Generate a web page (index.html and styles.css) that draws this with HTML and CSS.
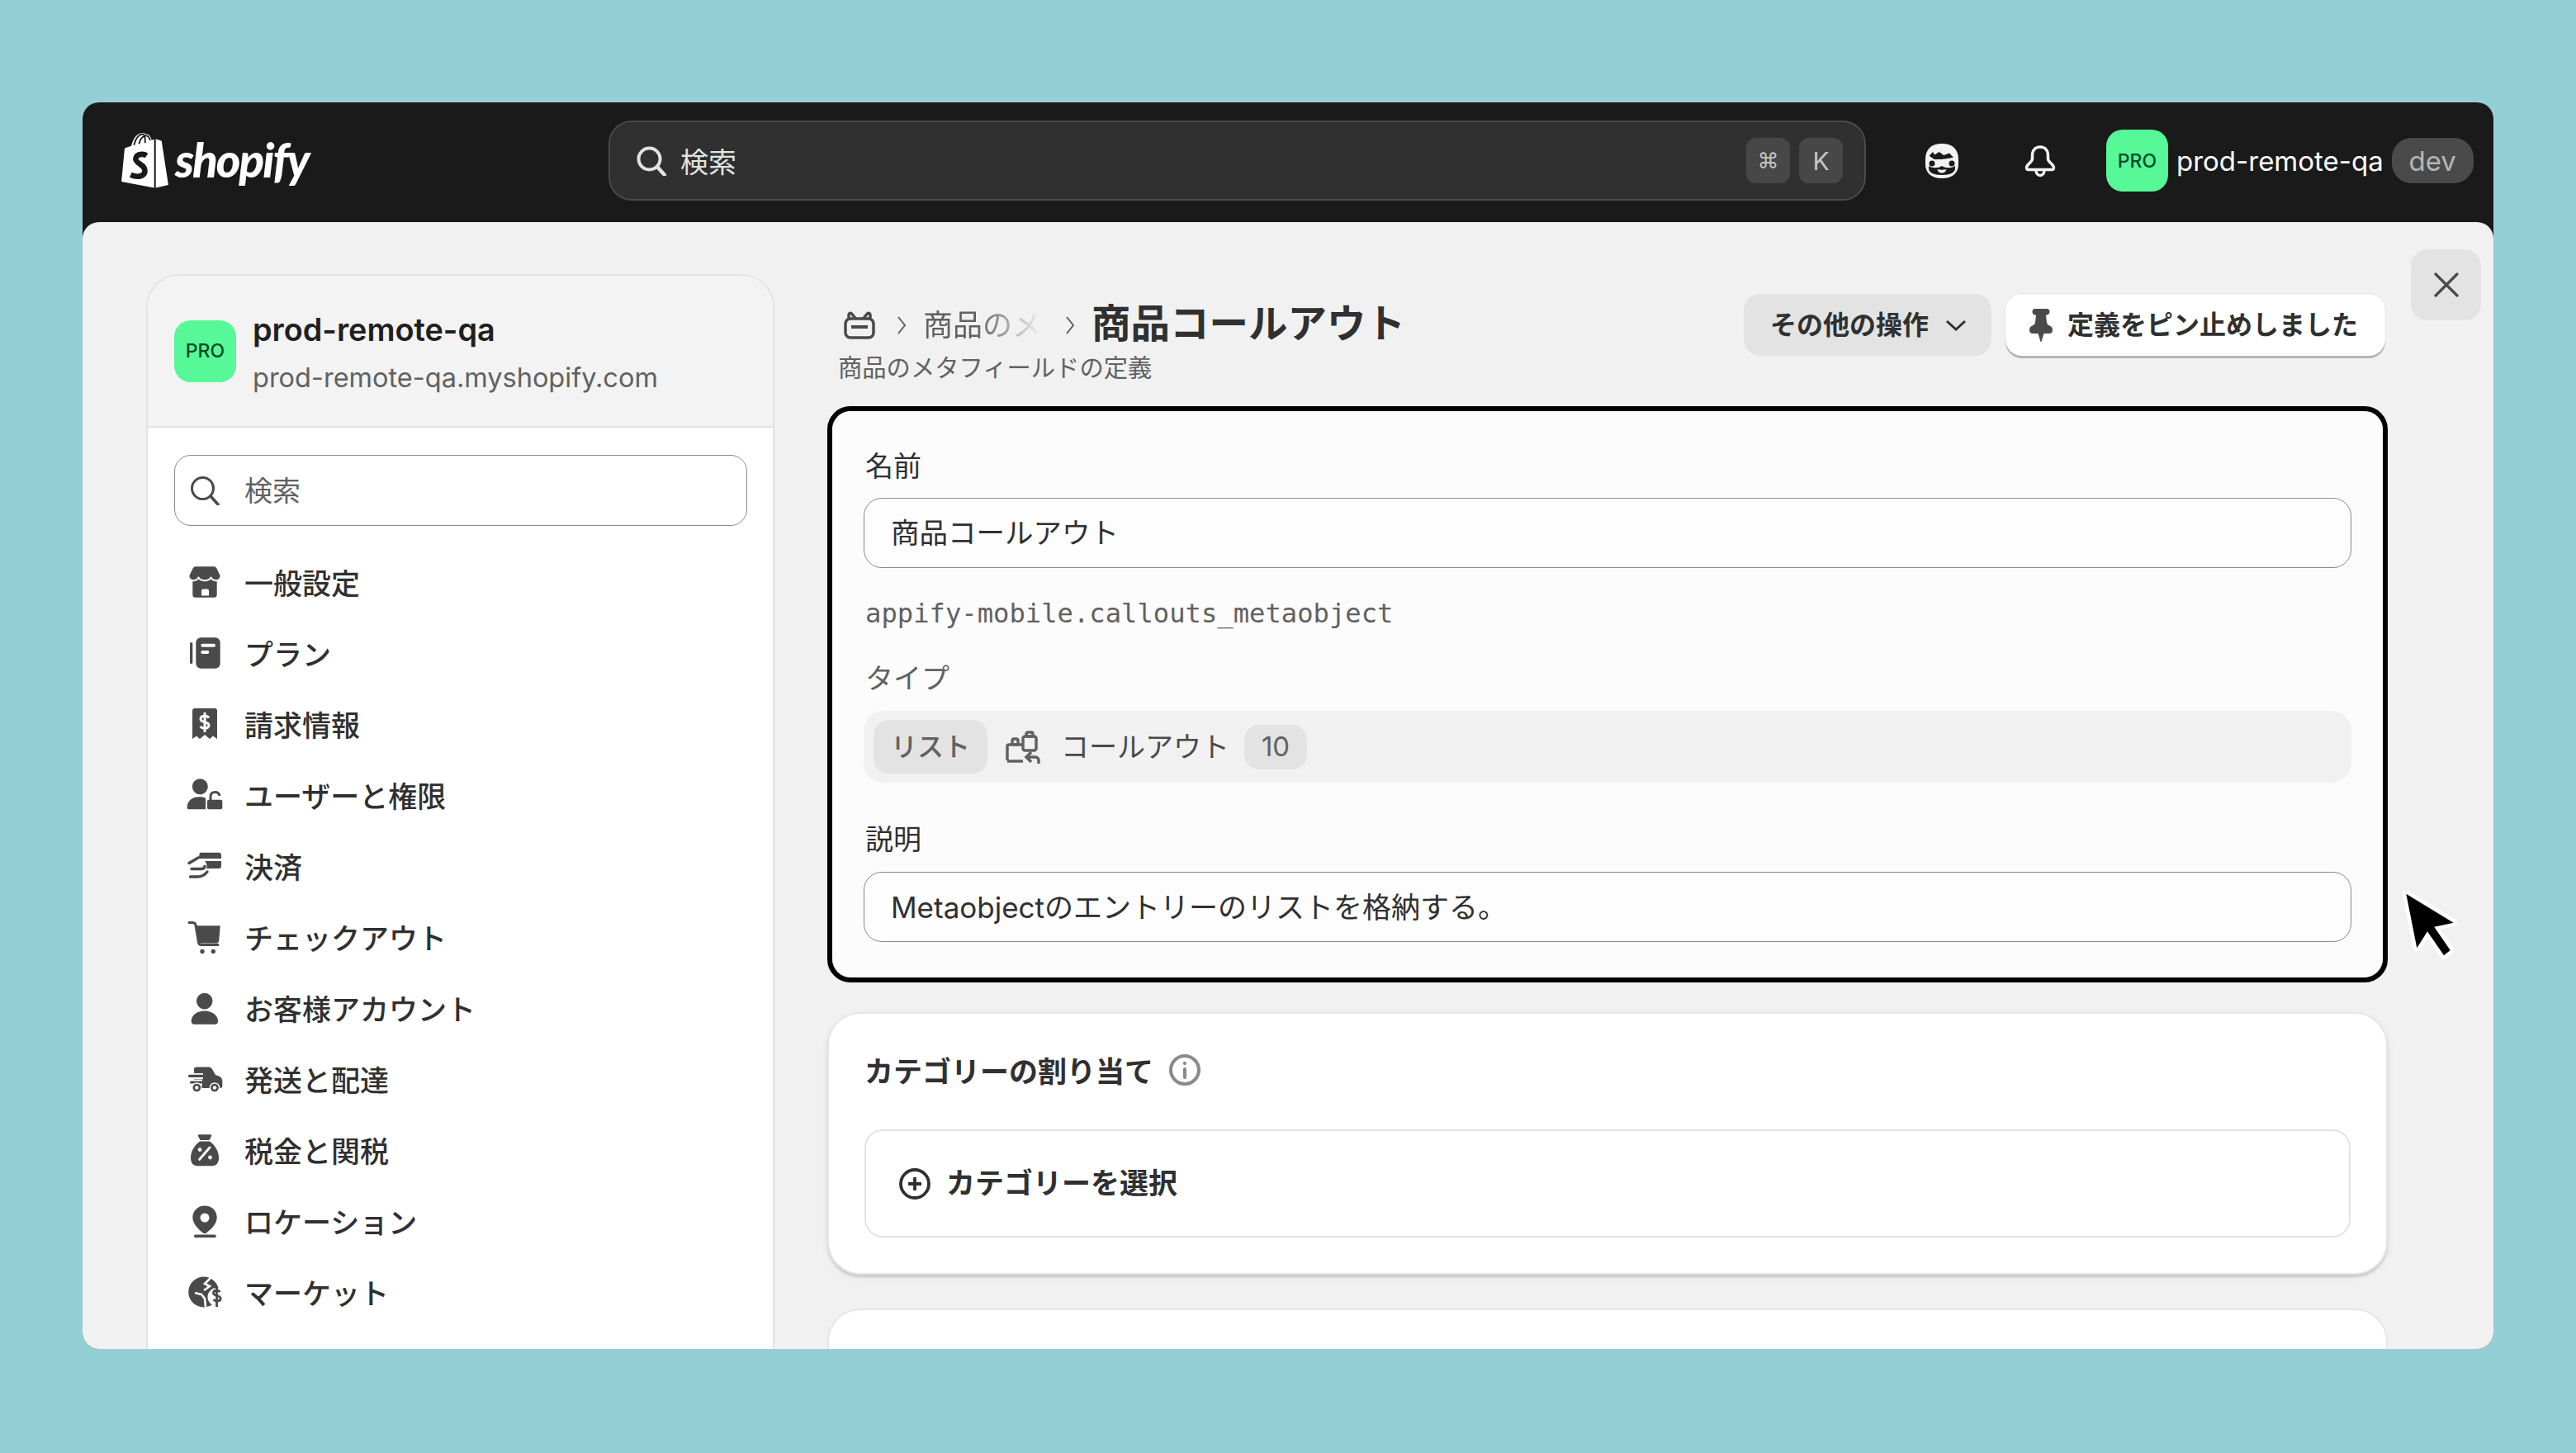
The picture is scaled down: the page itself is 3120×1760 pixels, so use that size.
FILE: index.html
```html
<!DOCTYPE html>
<html lang="ja">
<head>
    <meta charset="UTF-8">
    <title>商品コールアウト</title>
    <link rel="stylesheet" href="styles.css">
</head>
<body>
    <div class="window">
        <header class="topbar">
            <div class="logo">
                <svg class="logo-bag" viewBox="0 0 56 66">
                    <path fill="#fff" d="M38 8l-2 .6C35 4.500 33 1.500 29.500 1.500h-.8C27.600.4 26.400 0 25.300 0 17 0 13 10 11.800 15.500l-6 1.900c-1.800.6-1.900.6-2.100 2.300L0 58l39 7.500V7.800z"/>
                    <path fill="#fff" d="M41 7.500V65.500L56 62 48 10c-.1-.5-.5-.8-1-.9z"/>
                    <path fill="none" stroke="#1a1a1a" stroke-width="1.800" d="M15 14.500c1.500-6 5-12.500 10-13 2-.2 3 2 3.200 5.500v5M21 13c1-4.500 3-8.500 7-9.500 3-.7 5.500 1 6.200 5.500"/>
                    <path fill="none" stroke="#1a1a1a" stroke-width="6.500" d="M30 27c-3-2-12-3-13 3.500-.8 6 11.500 7 11 15-.4 6-8 8.500-17 4.500"/>
                </svg>
                <span class="logo-text">shopify</span>
            </div>
            <div class="global-search">
                <svg class="search-icon" viewBox="0 0 36 36"><circle cx="15.500" cy="15.500" r="13" fill="none" stroke="#e3e3e3" stroke-width="4"/><path d="M25 25l9 10" stroke="#e3e3e3" stroke-width="4.500" stroke-linecap="round"/></svg>
                <span class="global-search-text">検索</span>
                <span class="key key-cmd">⌘</span>
                <span class="key">K</span>
            </div>
            <svg class="mask-icon" viewBox="0 0 42 42">
                <path fill="#f3f3f3" d="M21 0c13 0 20 7 20 19v6c0 11-8 17-20 17S1 36 1 25v-6C1 7 8 0 21 0z"/>
                <path fill="#1a1a1a" d="M5.600 14.700L10 10l2.300 3.400L17.600 10l5.700 4 6.700-2.600 5 5.300-6.700 1.300-8.300 1-8.400 0zM5 27c5 3 11 3 16 0 5 3 11 3 16 0v3c0 5-6 8-16 8S5 35 5 30z"/>
                <circle cx="9" cy="24" r="3.500" fill="#1a1a1a"/><circle cx="33" cy="24" r="3.500" fill="#1a1a1a"/>
                <path fill="#f3f3f3" d="M15.500 31c3.500 1 7.500 1 11 0-.5 3-2.800 4.500-5.500 4.500S16 34 15.500 31z"/>
            </svg>
            <svg class="bell-icon" viewBox="0 0 40 42" fill="none" stroke="#f3f3f3" stroke-width="3.500">
                <path d="M20 4c-6.500 0-9.500 4.500-9.500 10.500v4c0 4-7 6.500-7 10.500 0 1.500 1 2.500 2.500 2.500h28c1.500 0 2.500-1 2.500-2.500 0-4-7-6.500-7-10.500v-4C29.500 8.500 26.500 4 20 4z"/>
                <path d="M15 32c0 4 2 6.500 5 6.500s5-2.500 5-6.500"/>
            </svg>
            <div class="avatar avatar-top">PRO</div>
            <span class="store-name">prod-remote-qa</span>
            <span class="dev-pill">dev</span>
        </header>

        <div class="content">
            <aside class="sidebar">
                <div class="store-head">
                    <div class="avatar">PRO</div>
                    <div class="store-text">
                        <div class="store-title">prod-remote-qa</div>
                        <div class="store-domain">prod-remote-qa.myshopify.com</div>
                    </div>
                </div>
                <div class="side-body">
                    <div class="side-search">
                        <svg class="side-search-icon" viewBox="0 0 36 36"><circle cx="15.500" cy="15.500" r="13" fill="none" stroke="#4a4a4a" stroke-width="3"/><path d="M25 25l9 10" stroke="#4a4a4a" stroke-width="3.500" stroke-linecap="round"/></svg>
                        <span>検索</span>
                    </div>
                    <nav class="side-nav">
                        <a class="nav-item">
                            <svg class="nav-icon" viewBox="0 0 44 40">
                                <rect x="7.300" y="12" width="29.400" height="27.700" rx="3.500"/>
                                <path stroke="#fff" stroke-width="2" d="M11 1.300h22c2.500 0 3.500 1 4.500 3l3.800 8c1 3.500-1.500 7-5.300 7-2.700 0-5-1.200-6.500-3.500-1.500 2.300-4 3.500-7.500 3.500s-6-1.200-7.500-3.500c-1.500 2.300-3.800 3.500-6.500 3.500-3.800 0-6.300-3.500-5.300-7l3.800-8c1-2 2-3 4.500-3z"/>
                                <path fill="#fff" d="M18 37.500v-6a2 2 0 0 1 2-2h5a2 2 0 0 1 2 2v6z"/>
                            </svg>
                            <span>一般設定</span>
                        </a>
                        <a class="nav-item">
                            <svg class="nav-icon" viewBox="0 0 44 40">
                                <rect x="4" y="8" width="3.300" height="26" rx="1.600"/>
                                <rect x="11.300" y="2.300" width="29.400" height="37.400" rx="6"/>
                                <rect x="17.300" y="9.700" width="17.700" height="4" rx="2" fill="#fff"/>
                                <rect x="17.300" y="18" width="10" height="4" rx="2" fill="#fff"/>
                            </svg>
                            <span>プラン</span>
                        </a>
                        <a class="nav-item">
                            <svg class="nav-icon" viewBox="0 0 44 40">
                                <path d="M10 2h24a3 3 0 0 1 3 3v34l-5-3.500-4 3.500-6-5-6 5-4-3.500-5 3.500V5a3 3 0 0 1 3-3z"/>
                                <path fill="none" stroke="#fff" stroke-width="3" d="M27 13.500c-1-1.500-3-2.200-5-2.200-2.800 0-5 1.300-5 3.600 0 5 10 2.700 10 7.600 0 2.300-2.200 3.700-5 3.700-2.200 0-4.200-.8-5.300-2.400M22 7v24"/>
                            </svg>
                            <span>請求情報</span>
                        </a>
                        <a class="nav-item">
                            <svg class="nav-icon" viewBox="0 0 44 40">
                                <circle cx="16.300" cy="10.700" r="9.500"/>
                                <path d="M.7 36c0-8 6-12.700 15-12.700 2.700 0 5 .4 7.300 1.300v13.700H3c-1.500 0-2.300-.8-2.300-2.300z"/>
                                <rect x="25" y="26.700" width="18.300" height="11.600" rx="2"/>
                                <path fill="none" stroke="#4a4a4a" stroke-width="3" d="M29 28v-5c0-3.500 2.300-5.500 5.500-5.500s5 2 5.500 4.500"/>
                            </svg>
                            <span>ユーザーと権限</span>
                        </a>
                        <a class="nav-item">
                            <svg class="nav-icon" viewBox="0 0 44 40">
                                <path d="M16 4.700h23a3 3 0 0 1 3 3v4.300H14.500z"/>
                                <path d="M22 15h20v6a3 3 0 0 1-3 3H24c1-3 .5-6-2-9z"/>
                                <path fill="none" stroke="#4a4a4a" stroke-width="3.400" stroke-linecap="round" d="M3 17.500l11-6.500M4.500 34H13c5 0 9-2 12-6M6 24.500h12c2 0 3.500-1 4-3"/>
                            </svg>
                            <span>決済</span>
                        </a>
                        <a class="nav-item">
                            <svg class="nav-icon" viewBox="0 0 44 40">
                                <path d="M11.700 6.200h29l-1.500 18c-.2 2-1.500 3.400-3.500 3.400H15.700z"/>
                                <path fill="none" stroke="#4a4a4a" stroke-width="3" stroke-linecap="round" d="M3 2.500h4c2.500 0 3.500 1 4 3l3.500 21c.3 2 1.500 3 3.500 3h20"/>
                                <circle cx="19" cy="37.500" r="2.700"/><circle cx="32.300" cy="37.500" r="2.700"/>
                            </svg>
                            <span>チェックアウト</span>
                        </a>
                        <a class="nav-item">
                            <svg class="nav-icon" viewBox="0 0 44 40">
                                <circle cx="21.700" cy="11.600" r="9.800"/>
                                <path d="M5.700 36c0-7.500 7-12.500 16-12.500s16.300 5 16.300 12.500c0 2.500-1.300 3.800-3.500 3.800H9.200c-2.200 0-3.500-1.300-3.500-3.800z"/>
                            </svg>
                            <span>お客様アカウント</span>
                        </a>
                        <a class="nav-item">
                            <svg class="nav-icon" viewBox="0 0 44 40">
                                <path d="M12 5.600h14c2.500 0 4.200 1 5.300 3l3.700 6.400 4.500 1.800c2.500 1 3.800 3 3.800 5.700v6c0 1.500-1 2.500-2.500 2.500H9V8c0-1.500 1-2.400 3-2.400z"/>
                                <path stroke="#fff" stroke-width="7" d="M0 16.400h20M0 24h19"/>
                                <path stroke="#4a4a4a" stroke-width="3.200" stroke-linecap="round" d="M3.500 16.400H20M5.500 24H18"/>
                                <circle cx="12.300" cy="30.500" r="5.600" stroke="#fff" stroke-width="1.500"/>
                                <circle cx="34" cy="30.500" r="5.600" stroke="#fff" stroke-width="1.500"/>
                                <circle cx="12.300" cy="30.500" r="2.200" fill="#fff"/><circle cx="34" cy="30.500" r="2.200" fill="#fff"/>
                            </svg>
                            <span>発送と配達</span>
                        </a>
                        <a class="nav-item">
                            <svg class="nav-icon" viewBox="0 0 44 40">
                                <path d="M15 1.300h14c1 0 1.500 1 1 2l-2.500 4.700h-11L14 3.300c-.5-1 0-2 1-2z"/>
                                <path d="M16 9.500h12c5.500 4 11 11 11 20 0 6-3 9.800-8 9.800H13c-5 0-8-3.800-8-9.800 0-9 5.500-16 11-20z"/>
                                <path stroke="#fff" stroke-width="2.800" stroke-linecap="round" d="M28 17L15.500 31.500"/>
                                <circle cx="16" cy="19.600" r="2.400" fill="#fff"/><circle cx="28.500" cy="29" r="2.400" fill="#fff"/>
                            </svg>
                            <span>税金と関税</span>
                        </a>
                        <a class="nav-item">
                            <svg class="nav-icon" viewBox="0 0 44 40">
                                <path d="M22 1.400c8.500 0 14.700 6.300 14.700 14.500 0 7.600-8 15-12.700 18.500-1.200.9-2.800.9-4 0-4.700-3.500-12.700-10.900-12.700-18.500C7.300 7.700 13.500 1.400 22 1.400z"/>
                                <circle cx="22" cy="16" r="5.500" fill="#fff"/>
                                <rect x="9" y="36.400" width="26.700" height="3.800" rx="1.900"/>
                            </svg>
                            <span>ロケーション</span>
                        </a>
                        <a class="nav-item">
                            <svg class="nav-icon" viewBox="0 0 44 40">
                                <circle cx="20.700" cy="20" r="18.500"/>
                                <circle cx="36.500" cy="26" r="11" fill="#fff"/>
                                <path fill="none" stroke="#fff" stroke-width="2.600" d="M29 3l-7 7 6 3-7 5M10 21l8 2 4 5 1 10"/>
                                <path fill="none" stroke="#4a4a4a" stroke-width="2.800" d="M40.500 20c-1-1.300-2.400-2-4-2-2.300 0-4 1.200-4 3.200 0 4.300 8.700 2.300 8.700 6.600 0 2-1.800 3.200-4.200 3.200-1.800 0-3.500-.7-4.500-2M36.500 14v24"/>
                            </svg>
                            <span>マーケット</span>
                        </a>
                    </nav>
                </div>
            </aside>

            <main class="main">
                <div class="page-head">
                    <div class="page-head-left">
                        <div class="breadcrumb">
                            <svg class="crumb-home" viewBox="0 0 38 34" fill="none" stroke="#4a4a4a" stroke-width="3.500">
                                <rect x="2" y="9" width="34" height="23" rx="6"/>
                                <path d="M6 10V4.500c0-2 2-3 3.500-1.500l5 6M32 10V4.500c0-2-2-3-3.500-1.500l-5 6"/>
                                <path stroke-width="4" d="M9 19h20"/>
                            </svg>
                            <svg class="crumb-chevron" viewBox="0 0 12 24" fill="none" stroke="#616161" stroke-width="2"><path d="M2 2l8 10-8 10"/></svg>
                            <span class="crumb-fade">商品のメ</span>
                            <svg class="crumb-chevron crumb-chevron-two" viewBox="0 0 12 24" fill="none" stroke="#616161" stroke-width="2"><path d="M2 2l8 10-8 10"/></svg>
                            <h1 class="page-title">商品コールアウト</h1>
                        </div>
                        <div class="page-sub">商品のメタフィールドの定義</div>
                    </div>
                    <div class="page-actions">
                        <button class="btn btn-grey">その他の操作
                            <svg class="btn-chevron" viewBox="0 0 26 14" fill="none" stroke="#303030" stroke-width="3"><path d="M2 2l11 10L24 2"/></svg>
                        </button>
                        <button class="btn btn-white">
                            <svg class="pin-icon" viewBox="0 0 30 40"><path fill="#4a4a4a" d="M8 0h14c2 0 3.500 1.500 3.500 3.500S24 7.500 22 7.500h-1l1 9c.2 1.500 1 2.500 2.500 3.500l2 1c1.500 1 2.500 2.500 2.500 4.500 0 3-1.500 4.500-4 4.500h-6.500L15.500 40h-1L11.500 30H5c-2.500 0-4-1.500-4-4.500 0-2 1-3.500 2.500-4.500l2-1C7 19 7.800 18 8 16.500l1-9H8c-2 0-3.500-1.500-3.500-4S6 0 8 0z"/></svg>
                            定義をピン止めしました
                        </button>
                    </div>
                </div>

                <div class="focus-ring">
                    <section class="card card-form">
                        <label class="field-label">名前</label>
                        <div class="text-input">商品コールアウト</div>
                        <div class="mono-key">appify-mobile.callouts_metaobject</div>
                        <label class="field-label field-muted">タイプ</label>
                        <div class="type-bar">
                            <span class="type-chip">リスト</span>
                            <svg class="ref-icon" viewBox="0 0 42 40" fill="none" stroke="#616161" stroke-width="3.500">
                                <path d="M2 36V19a2 2 0 0 1 2-2h16M2 37h19"/>
                                <rect x="8" y="10" width="7" height="7" rx="2"/>
                                <rect x="21" y="7" width="16" height="17" rx="2.500"/>
                                <rect x="25" y="2" width="8" height="5" rx="2"/>
                                <path d="M40 40v-4a4 4 0 0 0-4-4H26M31 26l-6 6 6 6"/>
                            </svg>
                            <span class="type-name">コールアウト</span>
                            <span class="type-count">10</span>
                        </div>
                        <label class="field-label field-desc">説明</label>
                        <div class="text-input text-input-latin">Metaobjectのエントリーのリストを格納する。</div>
                    </section>
                </div>

                <section class="card card-category">
                    <div class="card-title">
                        <span>カテゴリーの割り当て</span>
                        <svg class="info-icon" viewBox="0 0 38 38" fill="none" stroke="#8a8a8a" stroke-width="4">
                            <circle cx="19" cy="19" r="17"/>
                            <path stroke-linecap="round" d="M19 18v10"/>
                            <circle cx="19" cy="11" r="1.400" fill="#8a8a8a" stroke-width="1.500"/>
                        </svg>
                    </div>
                    <div class="category-box">
                        <svg class="plus-icon" viewBox="0 0 38 38" fill="none" stroke="#303030" stroke-width="3.800">
                            <circle cx="19" cy="19" r="17"/>
                            <path d="M19 11v16M11 19h16"/>
                        </svg>
                        <span>カテゴリーを選択</span>
                    </div>
                </section>

                <section class="card card-next"></section>
            </main>

            <button class="close-btn">
                <svg class="close-icon" viewBox="0 0 30 30" stroke="#4a4a4a" stroke-width="3.200" stroke-linecap="round"><path d="M2 2l26 26M28 2L2 28"/></svg>
            </button>
        </div>

        <svg class="cursor" viewBox="0 0 70 86">
            <path class="cursor-arrow" d="M4.300 4.700L61.700 39.700 38.300 44.700 57.700 73 50 79.300 30 50.300 17.300 70.300z"/>
        </svg>
    </div>
</body>
</html>
```

FILE: styles.css
```css
* {
    box-sizing: border-box;
}

body {
    margin: 0;
    height: 1760px;
    padding: 124px 100px 0;
    overflow: hidden;
    background-color: #95cfd6;
    font-family: Inter, "Noto Sans CJK JP", sans-serif;
    color: #303030;
}

.window {
    position: relative;
    display: flex;
    flex-direction: column;
    height: 1510px;
    overflow: hidden;
    background: #1a1a1a;
    border-radius: 20px;
}

/* top bar */
.topbar {
    display: flex;
    align-items: center;
    height: 145px;
    flex-shrink: 0;
    padding: 0 0 4px 47px;
    color: #fff;
}

.logo {
    display: flex;
    align-items: center;
    width: 590px;
}

.logo-bag {
    width: 57px;
    height: 67px;
}

.logo-text {
    margin: 0 0 4px 8px;
    font-family: Lato, sans-serif;
    font-size: 56.500px;
    font-weight: 900;
    font-style: italic;
    letter-spacing: -2px;
    line-height: 64px;
    color: #fff;
}

.global-search {
    display: flex;
    align-items: center;
    width: 1523px;
    height: 97px;
    padding: 0 26px 0 32px;
    background: #303030;
    border: 2px solid #4a4a4a;
    border-radius: 28px;
    font-size: 34px;
    color: #e3e3e3;
}

.search-icon {
    width: 36px;
    height: 36px;
}

.global-search-text {
    flex: 1;
    margin-left: 17px;
}

.key {
    display: flex;
    align-items: center;
    justify-content: center;
    width: 53px;
    height: 55px;
    margin-left: 11px;
    background: #474747;
    border-radius: 12px;
    font-size: 30px;
    color: #c4c4c4;
}

.key-cmd {
    font-family: "DejaVu Sans", sans-serif;
    font-size: 26px;
}

.mask-icon {
    width: 42px;
    height: 42px;
    margin-left: 71px;
}

.bell-icon {
    width: 40px;
    height: 42px;
    margin-left: 78px;
}

.avatar {
    display: flex;
    align-items: center;
    justify-content: center;
    width: 75px;
    height: 75px;
    flex-shrink: 0;
    background: #56f898;
    border-radius: 20px;
    font-size: 23px;
    font-weight: 500;
    color: #0e4a2c;
}

.avatar-top {
    margin-left: 60px;
}

.store-name {
    margin-left: 10px;
    font-size: 33px;
    line-height: 40px;
}

.dev-pill {
    display: flex;
    align-items: center;
    justify-content: center;
    width: 99px;
    height: 55px;
    margin-left: 10px;
    background: #4a4a4a;
    border-radius: 24px;
    font-size: 33px;
    color: #b5b5b5;
}

/* content area */
.content {
    display: flex;
    align-items: flex-start;
    flex: 1;
    overflow: hidden;
    padding-left: 77px;
    background: #f1f1f1;
    border-radius: 20px 20px 0 0;
}

.sidebar {
    width: 761px;
    flex-shrink: 0;
    margin-top: 63px;
    overflow: hidden;
    background: #fff;
    border: 2px solid #e3e3e3;
    border-radius: 40px 40px 0 0;
}

.store-head {
    display: flex;
    align-items: center;
    gap: 20px;
    height: 184px;
    padding-left: 32px;
    background: #f3f3f3;
    border-bottom: 2px solid #e3e3e3;
}

.store-text {
    padding-top: 7px;
}

.store-title {
    font-size: 37.800px;
    font-weight: 600;
    line-height: 48px;
    color: #202020;
}

.store-domain {
    margin-top: 11px;
    font-size: 32.500px;
    line-height: 48px;
    color: #616161;
}

.side-body {
    padding: 33px 31px 60px 32px;
}

.side-search {
    display: flex;
    align-items: center;
    height: 86px;
    padding-left: 18px;
    border: 1.500px solid #8a8a8a;
    border-radius: 20px;
    font-size: 34px;
    color: #616161;
}

.side-search span {
    padding-bottom: 4px;
}

.side-search-icon {
    width: 36px;
    height: 36px;
    margin-right: 30px;
}

.side-nav {
    margin-top: 24px;
}

.nav-item {
    display: flex;
    align-items: center;
    gap: 26px;
    height: 86.100px;
    margin-left: 15px;
    font-size: 35px;
    font-weight: 500;
    color: #303030;
}

.nav-icon {
    width: 44px;
    height: 40px;
    flex-shrink: 0;
    fill: #4a4a4a;
}

/* main column */
.main {
    width: 1890px;
    flex-shrink: 0;
    margin-left: 64px;
    padding-top: 87px;
}

.page-head {
    display: flex;
    justify-content: space-between;
    height: 136px;
    padding-right: 3px;
}

.breadcrumb {
    display: flex;
    align-items: center;
    height: 75px;
    padding-left: 20px;
}

.crumb-home {
    width: 38px;
    height: 34px;
}

.crumb-chevron {
    width: 12px;
    height: 24px;
    margin: 0 20px 0 26px;
}

.crumb-chevron-two {
    margin: 0 20px 0 29px;
}

.crumb-fade {
    width: 143px;
    margin-bottom: 6px;
    font-size: 36px;
    white-space: nowrap;
    color: #616161;
    -webkit-mask-image: linear-gradient(to right, #000 45%, transparent 100%);
    mask-image: linear-gradient(to right, #000 45%, transparent 100%);
}

.page-title {
    margin: 0 0 3px;
    font-size: 47.500px;
    font-weight: 700;
    line-height: 60px;
    color: #303030;
}

.page-sub {
    margin-top: -1px;
    padding-left: 13px;
    font-size: 29.300px;
    line-height: 32px;
    color: #616161;
}

.page-actions {
    display: flex;
    gap: 17px;
}

.btn {
    display: flex;
    align-items: center;
    height: 75px;
    border: none;
    border-radius: 20px;
    font-family: inherit;
    font-size: 32px;
    font-weight: 600;
    color: #303030;
}

.btn-grey {
    width: 300px;
    padding: 0 0 6px 32px;
    background: #e3e3e3;
}

.btn-chevron {
    width: 26px;
    height: 14px;
    margin: 6px 0 0 20px;
}

.btn-white {
    width: 460px;
    padding: 0 0 6px 28px;
    background: #fff;
    box-shadow: 0 3px 0 #b5b5b5, 0 0 0 1px #e3e3e3;
}

.pin-icon {
    width: 30px;
    height: 40px;
    margin: 6px 17px 0 0;
}

.focus-ring {
    height: 698px;
    background: linear-gradient(#f1f1f1 50%, #cfcfcf 50%);
    border: 6px solid #000;
    border-radius: 28px;
}

.card {
    background: #fff;
    border-radius: 40px;
}

.card-form {
    height: 686px;
    padding: 47px 38px 0;
    background: #fcfcfc;
    border-radius: 24px;
}

.field-label {
    display: block;
    padding-left: 2px;
    font-size: 34px;
    line-height: 40px;
    color: #303030;
}

.field-muted {
    margin-top: 39px;
    color: #616161;
}

.field-desc {
    margin-top: 49px;
}

.text-input {
    display: flex;
    align-items: center;
    height: 85px;
    margin-top: 18px;
    padding: 0 0 5px 32px;
    background: #fdfdfd;
    border: 1.500px solid #8a8a8a;
    border-radius: 22px;
    font-size: 34.500px;
    color: #303030;
}

.text-input-latin {
    margin-top: 19px;
    font-size: 35px;
}

.mono-key {
    margin-top: 35px;
    padding-left: 2px;
    font-family: "DejaVu Sans Mono", monospace;
    font-size: 32.200px;
    line-height: 40px;
    color: #616161;
}

.type-bar {
    display: flex;
    align-items: center;
    height: 87px;
    margin-top: 19px;
    padding-left: 12px;
    background: #f1f1f1;
    border-radius: 24px;
}

.type-chip {
    display: flex;
    align-items: center;
    justify-content: center;
    width: 138px;
    height: 65px;
    padding-bottom: 5px;
    background: #e3e3e3;
    border-radius: 18px;
    font-size: 32px;
    font-weight: 500;
    color: #616161;
}

.ref-icon {
    width: 42px;
    height: 40px;
    margin-left: 22px;
}

.type-name {
    margin: 0 0 5px 25px;
    font-size: 34px;
    color: #4a4a4a;
}

.type-count {
    display: flex;
    align-items: center;
    justify-content: center;
    width: 76px;
    height: 54px;
    margin-left: 18px;
    padding-bottom: 2px;
    background: #e3e3e3;
    border-radius: 18px;
    font-size: 33px;
    color: #616161;
}

.card-category {
    height: 318px;
    margin-top: 36px;
    padding: 0 43px;
    border: 2px solid #e6e6e6;
    box-shadow: 0 3px 3px rgba(0, 0, 0, 0.14), 0 4px 14px rgba(0, 0, 0, 0.04);
}

.card-title {
    display: flex;
    align-items: center;
    gap: 19px;
    height: 140px;
    padding-bottom: 4px;
    font-size: 35px;
    font-weight: 700;
}

.card-title span {
    padding-bottom: 2px;
}

.info-icon {
    width: 38px;
    height: 38px;
}

.category-box {
    display: flex;
    align-items: center;
    gap: 19px;
    height: 131px;
    padding-left: 40px;
    border: 2px solid #e3e3e3;
    border-radius: 22px;
    font-size: 35px;
    font-weight: 700;
}

.category-box span {
    padding-bottom: 6px;
}

.plus-icon {
    width: 38px;
    height: 38px;
}

.card-next {
    height: 300px;
    margin-top: 41px;
    border: 2px solid #e6e6e6;
}

.close-btn {
    display: flex;
    align-items: center;
    justify-content: center;
    width: 85px;
    height: 86px;
    flex-shrink: 0;
    margin: 33px 0 0 28px;
    padding: 0;
    background: #e3e3e3;
    border: none;
    border-radius: 20px;
}

.close-icon {
    width: 30px;
    height: 30px;
}

/* pointer over the page */
.cursor {
    position: absolute;
    left: 2810px;
    top: 954px;
    width: 70px;
    height: 86px;
    overflow: visible;
}

.cursor-arrow {
    fill: #000;
    stroke: #fff;
    stroke-width: 9px;
    stroke-linejoin: round;
    paint-order: stroke;
}
```
